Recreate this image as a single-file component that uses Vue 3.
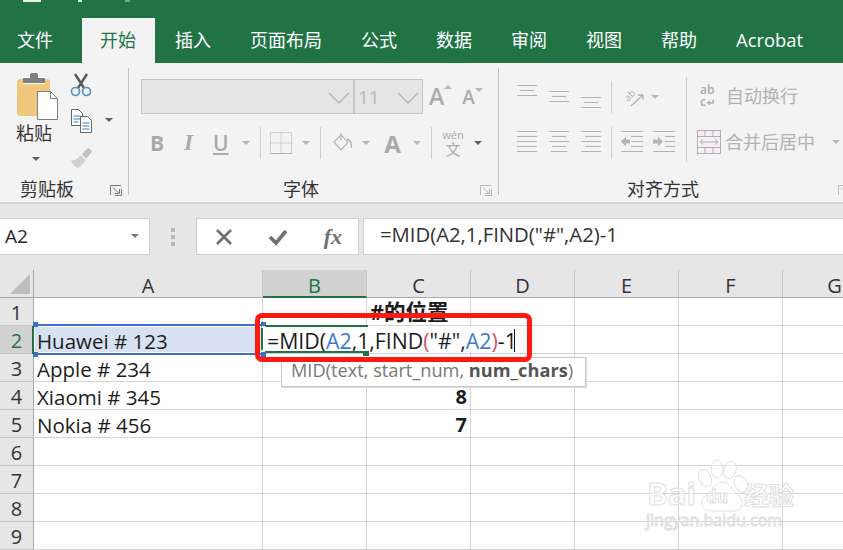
<script setup>
const tabs = ['文件', '开始', '插入', '页面布局', '公式', '数据', '审阅', '视图', '帮助', 'Acrobat']
const cols = ['A', 'B', 'C', 'D', 'E', 'F', 'G']
const rows = [
  { n: 1, cells: ['', '', '#的位置', '', '', '', ''] },
  { n: 2, cells: ['', '', '', '', '', '', ''] },
  { n: 3, cells: ['Apple # 234', '', '', '', '', '', ''] },
  { n: 4, cells: ['Xiaomi # 345', '', '8', '', '', '', ''] },
  { n: 5, cells: ['Nokia # 456', '', '7', '', '', '', ''] },
  { n: 6, cells: ['', '', '', '', '', '', ''] },
  { n: 7, cells: ['', '', '', '', '', '', ''] },
  { n: 8, cells: ['', '', '', '', '', '', ''] },
  { n: 9, cells: ['', '', '', '', '', '', ''] },
]
</script>

<template>
  <div class="app">
    <header class="title">
      <div class="qat">
        <i class="qa qa1"></i><i class="qa qa2"></i><i class="qa qa3"></i>
      </div>
      <nav class="tabs">
        <span v-for="(t, i) in tabs" :key="t" class="tab" :class="{ first: i === 0, active: i === 1 }">{{ t }}</span>
      </nav>
    </header>

    <section class="ribbon">
      <div class="group g-clip">
        <div class="clip-body">
          <div class="paste">
            <svg width="42" height="48" viewBox="0 0 42 48">
              <rect x="0" y="7" width="33" height="37" rx="3" fill="#f0c87d"/>
              <rect x="6" y="5" width="22" height="7" fill="#fff"/>
              <path d="M6 11V6h7V3a2 2 0 0 1 2-2h4a2 2 0 0 1 2 2v3h7v5z" fill="#7f7f7f"/>
              <path d="M20.500 19.500h13l7 7v21h-20z" fill="#fff" stroke="#7f7f7f"/>
              <path d="M33.500 19.500v7h7" fill="none" stroke="#7f7f7f"/>
            </svg>
            <span class="paste-label">粘贴</span>
            <i class="caret dark paste-caret"></i>
          </div>
          <div class="clip-tools">
            <svg width="22" height="24" viewBox="0 0 22 24">
              <path d="M5 1l9 14M17 1L8 15" stroke="#5a5a5a" stroke-width="2.400" fill="none"/>
              <circle cx="5.500" cy="18.500" r="4" fill="none" stroke="#5b8ec7" stroke-width="1.700"/>
              <circle cx="16.500" cy="18.500" r="4" fill="none" stroke="#5b8ec7" stroke-width="1.700"/>
            </svg>
            <div class="copy-row">
              <svg width="22" height="24" viewBox="0 0 22 24">
                <path d="M.5.5h7l4 4v12H.5z" fill="#fff" stroke="#666"/>
                <path d="M2.500 7h7M2.500 10h7M2.500 13h5" stroke="#3f7fc4"/>
                <path d="M9.500 7.500h7l4 4v12h-11z" fill="#fff" stroke="#666"/>
                <path d="M11.500 14h7M11.500 17h7M11.500 20h7" stroke="#3f7fc4"/>
              </svg>
              <i class="caret dark copy-caret"></i>
            </div>
            <svg width="24" height="24" viewBox="0 0 24 24">
              <path d="M1 15c4 1 7-1 9-5l6 5c-3 3-5 6-8 8-3-1-6-4-7-8z" fill="#d3cfd3"/>
              <path d="M12 9l6-6 2 1 2 2-1 2-5 6z" fill="#c4c0c4"/>
            </svg>
          </div>
        </div>
        <div class="glabel clip-label">
          <span>剪贴板</span>
          <svg class="launch" width="12" height="11" viewBox="0 0 12 11"><path d="M.5 10V.5H11M3 2.500l6 6M5 8.500h4.500V4M11.500 4v6.500H5" fill="none" stroke="#777"/></svg>
        </div>
      </div>

      <div class="group g-font">
        <div class="font-row1">
          <div class="combo name"><svg width="22" height="12" viewBox="0 0 22 12"><path d="M1 1l10 10L21 1" fill="none" stroke="#b4b4b4" stroke-width="1.300"/></svg></div>
          <div class="combo size"><span>11</span><svg width="22" height="12" viewBox="0 0 22 12"><path d="M1 1l10 10L21 1" fill="none" stroke="#b4b4b4" stroke-width="1.300"/></svg></div>
          <div class="grow-a big">A<i class="caret up"></i></div>
          <div class="grow-a small">A<i class="caret"></i></div>
        </div>
        <div class="font-row2">
          <b class="fb">B</b>
          <em class="fi">I</em>
          <span class="fu">U</span>
          <i class="caret c-u"></i>
          <i class="vsep s1"></i>
          <svg class="border-ic" width="22" height="22" viewBox="0 0 22 22"><path d="M.5.5h21v21H.5zM11 .5v21M.5 11h21" fill="none" stroke="#b6aeb6" stroke-dasharray="1 1"/><path d="M0 21.500h22" stroke="#b6aeb6"/></svg>
          <i class="caret c-b"></i>
          <i class="vsep s2"></i>
          <svg class="fill-ic" width="19" height="20" viewBox="0 0 19 20"><path d="M1 9l7-7 7 7-7 8z" fill="#f3f3f3" stroke="#b4b4b4" stroke-width="1.200"/><path d="M8 0v7" stroke="#b4b4b4" stroke-width="1.200"/><path d="M14 6c3 1 5 4 4 9" fill="none" stroke="#b4b4b4" stroke-width="1.400"/></svg>
          <i class="caret c-f"></i>
          <span class="fa">A</span>
          <i class="caret c-a"></i>
          <i class="vsep s3"></i>
          <span class="wen"><small>wén</small><span>文</span></span>
          <i class="caret dark c-w"></i>
        </div>
        <div class="glabel font-label">
          <span>字体</span>
          <svg class="launch" width="12" height="11" viewBox="0 0 12 11"><path d="M.5 10V.5H11M3 2.500l6 6M5 8.500h4.500V4M11.500 4v6.500H5" fill="none" stroke="#bbb"/></svg>
        </div>
      </div>

      <div class="group g-align">
        <div class="align-top">
          <div class="align-left">
            <div class="a-row r1">
              <svg class="va v1" width="20" height="11" viewBox="0 0 20 11"><path d="M0 .5h20M3 5.500h14M0 10.500h20" stroke="#b4b4b4" fill="none"/></svg>
              <svg class="va v2" width="20" height="11" viewBox="0 0 20 11"><path d="M0 .5h20M3 5.500h14M0 10.500h20" stroke="#b4b4b4" fill="none"/></svg>
              <svg class="va v3" width="20" height="11" viewBox="0 0 20 11"><path d="M0 .5h20M3 5.500h14M0 10.500h20" stroke="#b4b4b4" fill="none"/></svg>
              <i class="vsep s4"></i>
              <svg class="orient" width="22" height="20" viewBox="0 0 22 20"><path d="M9 19L21 8M21 8h-5M21 8v5" fill="none" stroke="#b4b4b4" stroke-width="1.300"/><text x="6" y="15" font-size="10" fill="#b4b4b4" font-family="Open Sans" transform="rotate(-45 6 15)">ab</text></svg>
              <i class="caret c-o"></i>
            </div>
            <div class="a-row r2">
              <svg class="ha" width="20" height="21" viewBox="0 0 20 21"><path d="M0 .5h20M0 5.500h20M0 10.500h20M0 15.500h20M0 20.500h20" stroke="#b4b4b4"/></svg>
              <svg class="ha h2" width="20" height="21" viewBox="0 0 20 21"><path d="M0 .5h20M3 5.500h14M0 10.500h20M3 15.500h14M2 20.500h16" stroke="#b4b4b4"/></svg>
              <svg class="ha h2" width="20" height="21" viewBox="0 0 20 21"><path d="M0 .5h20M4 5.500h16M0 10.500h20M4 15.500h16M0 20.500h20" stroke="#b4b4b4"/></svg>
              <i class="vsep s5"></i>
              <svg class="ind i1" width="22" height="21" viewBox="0 0 22 21"><path d="M0 .5h22M10 5.500h12M10 10.500h12M10 15.500h12M0 20.500h22" stroke="#b4b4b4"/><path d="M0 10.500l5-5v3h4v4H5v3z" fill="#b4b4b4"/></svg>
              <svg class="ind i2" width="22" height="21" viewBox="0 0 22 21"><path d="M0 .5h22M12 5.500h10M12 10.500h10M12 15.500h10M0 20.500h22" stroke="#b4b4b4"/><path d="M10 10.500l-5-5v3H0v4h5v3z" fill="#b4b4b4"/></svg>
            </div>
          </div>
          <i class="vsep s6"></i>
          <div class="align-right">
            <div class="wrap-row">
              <span class="abc"><span>ab</span><span>c<small>↵</small></span></span>
              <span class="cmd">自动换行</span>
            </div>
            <div class="merge-row">
              <svg width="24" height="24" viewBox="0 0 24 24"><rect x=".5" y=".5" width="23" height="23" fill="#f4eff4" stroke="#b4aeb4"/><path d="M.5 6.500h23M.5 17.500h23M8 .5v6M16 .5v6M8 17.500v6M16 17.500v6" stroke="#b4aeb4" fill="none"/><path d="M3 12h18M6 9.500l-3 2.500 3 2.500M18 9.500l3 2.500-3 2.500" stroke="#b4aeb4" fill="none"/></svg>
              <span class="cmd">合并后居中</span>
              <i class="caret c-m"></i>
            </div>
          </div>
        </div>
        <div class="glabel align-label">
          <span>对齐方式</span>
          <svg class="launch" width="12" height="11" viewBox="0 0 12 11"><path d="M.5 10V.5H11M3 2.500l6 6M5 8.500h4.500V4M11.500 4v6.500H5" fill="none" stroke="#bbb"/></svg>
        </div>
      </div>
    </section>

    <section class="fbar">
      <div class="namebox"><span>A2</span><i class="caret"></i></div>
      <div class="grip"><i></i><i></i><i></i></div>
      <div class="fbtns">
        <svg width="18" height="18" viewBox="0 0 18 18"><path d="M2 2l14 14M16 2L2 16" stroke="#707070" stroke-width="2.600"/></svg>
        <svg width="20" height="18" viewBox="0 0 20 18"><path d="M2 9l6 6L18 3" fill="none" stroke="#707070" stroke-width="3.600"/></svg>
        <span class="fx">fx</span>
      </div>
      <div class="finput">=MID(A2,1,FIND("#",A2)-1</div>
    </section>

    <section class="sheet">
      <div class="corner"><i></i></div>
      <div v-for="c in cols" :key="c" class="chead" :class="{ sel: c === 'B' }">{{ c }}</div>
      <template v-for="r in rows" :key="r.n">
        <div class="rhead" :class="{ sel: r.n === 2 }">{{ r.n }}</div>
        <div v-for="(v, i) in r.cells" :key="i" class="cell" :class="{ hdr: i === 2 && r.n === 1, num: i === 2 && r.n > 1 }">{{ v }}</div>
      </template>

      <div class="range">
        <span>Huawei # 123</span>
        <i class="hd tl"></i><i class="hd bl"></i><i class="hd tr"></i><i class="hd br"></i>
      </div>
      <i class="row-mark"></i>

      <div class="editor">
        <i class="ed-top"></i><i class="ed-bot"></i><i class="ed-left"></i><i class="ed-handle"></i>
        <span>=MID(<b class="ref">A2</b>,1,FIND<b class="par">(</b>"#",<b class="ref">A2</b><b class="par">)</b>-1</span><i class="cursor"></i>
      </div>
      <div class="tip">MID(text, start_num, <b>num_chars</b>)</div>
      <div class="redbox"></div>

      <svg class="mark" width="160" height="85" viewBox="0 0 160 85">
        <g fill="#fff" fill-opacity=".45" stroke="#e0e0e0" stroke-width="1">
          <ellipse cx="64" cy="20" rx="6" ry="9" transform="rotate(-25 64 20)"/>
          <ellipse cx="76" cy="11" rx="6" ry="9"/>
          <ellipse cx="89" cy="12" rx="6" ry="9" transform="rotate(15 89 12)"/>
          <ellipse cx="100" cy="26" rx="6" ry="9" transform="rotate(-30 100 26)"/>
          <path d="M82 24c8 0 9 10 16 14 7 6 3 15-6 15H70c-9 0-12-9-6-15 7-4 9-14 18-14z"/>
        </g>
        <g fill="#fff" fill-opacity=".6" stroke="#e0e0e0" stroke-width="1" font-family="Open Sans" font-weight="700">
          <text x="6" y="47" font-size="31">Bai</text>
          <text x="65" y="45" font-size="17">du</text>
          <text x="103" y="47" font-size="25" font-family="Noto Sans CJK SC">经验</text>
          <text x="5" y="68" font-size="16" font-weight="400">jingyan.baidu.com</text>
        </g>
      </svg>
    </section>
  </div>
</template>

<style>
html, body { margin: 0; background: #fff; overflow: hidden; }
</style>

<style scoped>
.app {
  width: 843px; height: 550px; overflow: hidden; display: flex; flex-direction: column;
  font-family: "Open Sans", "Noto Sans CJK SC", sans-serif; color: #262626;
}
.title { height: 63px; background: #217346; flex: none; position: relative; }
.qat { height: 18px; display: flex; align-items: flex-start; }
.qa { display: block; height: 2px; }
.qa1 { width: 18px; margin-left: 23px; background: #e8efe9; }
.qa2 { width: 4px; margin-left: 37px; background: #e8efe9; }
.qa3 { width: 5px; margin-left: 43px; background: #7fa08c; }
.tabs { display: flex; height: 45px; font-size: 18px; color: #fff; }
.tab { padding: 0 19px 0 20px; line-height: 45px; white-space: nowrap; }
.tab:last-child { font-size: 18.400px; line-height: 43px; }
.tab.first { padding: 0 29px 0 17px; }
.tab.active { background: #f3f3f3; color: #217346; padding: 0 19px 0 18px; }

.ribbon { height: 139px; flex: none; background: #f3f3f3; display: flex; border-bottom: 2px solid #d6d6d6; box-sizing: content-box; }
.group { display: flex; flex-direction: column; position: relative; }
.g-clip { width: 128px; border-right: 1px solid #c4c4c4; margin: 5px 0 7px; height: 127px; }
.g-font { width: 369px; border-right: 1px solid #c4c4c4; margin: 5px 0 7px; height: 127px; }
.g-align { flex: 1; margin: 5px 0 7px; height: 127px; }
.caret { display: block; width: 0; height: 0; border: 4px solid transparent; border-top: 4px solid #b8b8b8; border-bottom: 0; flex: none; }
.caret.dark { border-top-color: #606060; }
.caret.up { border-top: 0; border-bottom: 4px solid #b8b8b8; }
.vsep { display: block; width: 1px; background: #cfcfcf; flex: none; }

.clip-body { display: flex; height: 104px; }
.paste { width: 53px; margin-left: 17px; display: flex; flex-direction: column; align-items: flex-start; padding-top: 4px; }
.paste-label { font-size: 18px; line-height: 24px; margin: 1px 0 0 -1px; color: #333; }
.paste-caret { margin: 12px 0 0 15px; }
.clip-tools { display: flex; flex-direction: column; gap: 12px; padding-top: 5px; }
.copy-row { display: flex; align-items: center; gap: 10px; margin-left: 1px; }
.copy-caret { margin-left: 2px; margin-top: -2px; }
.glabel { position: absolute; left: 0; right: 0; top: 109px; height: 24px; text-align: center; font-size: 18px; line-height: 24px; color: #333; }
.launch { position: absolute; top: 8px; right: 6px; }
.clip-label { text-align: left; }
.clip-label span { margin-left: 20px; }
.font-label span { margin-right: 25px; }
.align-label span { margin-right: 16px; }
.align-label .launch { right: -7px; }
.font-row1 { display: flex; align-items: flex-start; padding: 11px 0 0 12px; height: 35px; }
.combo { height: 35px; box-sizing: border-box; background: #e5e5e5; border: 1px solid #c6c6c6; display: flex; align-items: center; justify-content: flex-end; flex: none; }
.combo svg { margin: 2px 3px 0 0; }
.combo.name { width: 213px; }
.combo.size { width: 69px; justify-content: space-between; color: #b8b8b8; font-size: 19px; padding-left: 3px; }
.grow-a { display: flex; align-items: flex-start; color: #aaa; font-weight: 600; line-height: 1; flex: none; }
.grow-a.big { font-size: 23px; margin: 6px 0 0 6px; }
.grow-a.small { font-size: 19px; margin: 9px 0 0 10px; }
.font-row2 { display: flex; align-items: center; height: 36px; margin-top: 11px; padding-left: 21px; color: #aaa; }
.fb, .fi, .fu, .fa { display: block; flex: none; text-align: center; }
.fb { font-size: 21px; font-weight: 700; width: 14px; }
.fi { font-size: 23px; font-family: "Liberation Serif", serif; font-weight: 700; margin-left: 18px; width: 13px; }
.fu { font-size: 21px; margin-left: 18px; width: 15px; font-weight: 600; text-decoration: underline; text-underline-offset: 2px; }
.c-u { margin-left: 14px; }
.font-row2 .vsep { height: 32px; }
.s1 { margin-left: 10px; }
.border-ic { margin-left: 9px; flex: none; }
.c-b { margin-left: 10px; }
.s2 { margin-left: 10px; }
.fill-ic { margin-left: 12px; flex: none; }
.c-f { margin-left: 10px; }
.fa { font-size: 24px; font-weight: 700; margin-left: 14px; width: 17px; }
.c-a { margin-left: 12px; }
.s3 { margin-left: 10px; }
.wen { display: flex; flex-direction: column; align-items: center; margin: 0 0 0 10px; line-height: 1; width: 22px; flex: none; }
.wen small { font-size: 11px; line-height: 13px; }
.wen span { font-size: 15px; line-height: 17px; }
.c-w { margin-left: 10px; }

.align-top { display: flex; height: 100px; }
.align-left { width: 187px; box-sizing: border-box; padding-left: 18px; flex: none; }
.a-row { display: flex; }
.r1 { height: 46px; padding-top: 17px; box-sizing: border-box; align-items: flex-start; }
.va { flex: none; }
.v2 { margin: 6px 0 0 12px; }
.v3 { margin: 12px 0 0 12px; }
.s4 { height: 32px; margin: -4px 0 0 10px; }
.orient { margin: 2px 0 0 10px; flex: none; overflow: visible; }
.c-o { margin: 10px 0 0 7px; }
.r2 { height: 36px; margin-top: 17px; align-items: flex-start; }
.h2 { margin-left: 12px; }
.s5 { height: 32px; margin: -4px 0 0 10px; }
.i1 { margin-left: 9px; }
.i2 { margin-left: 10px; }
.s6 { height: 85px; margin-top: 9px; }
.align-right { padding-left: 10px; }
.wrap-row { display: flex; align-items: center; height: 34px; margin: 11px 0 0 3px; }
.abc { display: flex; flex-direction: column; color: #aaa; font-size: 12px; line-height: 12px; width: 26px; font-weight: 600; flex: none; }
.abc small { font-size: 10px; margin-left: 1px; }
.cmd { font-size: 18px; color: #b2b2b2; line-height: 24px; white-space: nowrap; }
.merge-row { display: flex; align-items: center; gap: 4px; height: 34px; margin-top: 12px; }
.merge-row svg { flex: none; }
.c-m { margin-left: 13px; }

.fbar { height: 66px; flex: none; background: #e6e6e6; display: flex; align-items: flex-start; padding-top: 14px; box-sizing: border-box; }
.namebox { width: 150px; height: 37px; box-sizing: border-box; background: #fff; border: 1px solid #d0d0d0; border-left: 0; display: flex; align-items: center; justify-content: space-between; padding: 0 10px 2px 5px; font-size: 19px; flex: none; }
.namebox .caret { border-top-color: #7a7a7a; }
.grip { width: 46px; height: 37px; flex: none; display: flex; flex-direction: column; justify-content: center; align-items: center; gap: 3px; }
.grip i { display: block; width: 4px; height: 4px; background: #b8b8b8; }
.fbtns { width: 163px; height: 37px; box-sizing: border-box; background: #fff; border: 1px solid #d0d0d0; display: flex; align-items: center; justify-content: space-between; padding: 0 16px 0 18px; flex: none; }
.fx { font-family: "Liberation Serif", serif; font-style: italic; font-weight: 700; font-size: 22px; color: #707070; }
.finput { flex: 1; height: 37px; margin-left: 4px; box-sizing: border-box; background: #fff; border: 1px solid #d0d0d0; border-right: 0; padding-left: 16px; font-size: 20.300px; line-height: 31px; color: #333; white-space: nowrap; }

.sheet { flex: 1; position: relative; display: grid; grid-template-columns: 34px 229px repeat(6, 104px); grid-template-rows: 28px repeat(9, 28px); background: #fff; }
.corner { background: #e6e6e6; border-right: 1px solid #a9a9a9; border-bottom: 1px solid #a9a9a9; box-sizing: border-box; display: flex; justify-content: flex-end; align-items: flex-end; padding: 0 3px 3px 0; }
.corner i { display: block; width: 0; height: 0; border-left: 20px solid transparent; border-bottom: 20px solid #bdbdbd; }
.chead { background: #e6e6e6; border-right: 1px solid #c6c6c6; border-bottom: 1px solid #a9a9a9; box-sizing: border-box; text-align: center; font-size: 20px; line-height: 31px; color: #333; overflow: hidden; }
.chead.sel { background: #d2d2d2; color: #217346; border-bottom: 2px solid #217346; }
.rhead { background: #e6e6e6; border-right: 1px solid #a9a9a9; border-bottom: 1px solid #c6c6c6; box-sizing: border-box; text-align: center; font-size: 20px; line-height: 30px; color: #333; }
.rhead.sel { background: #d2d2d2; color: #217346; }
.cell { border-right: 1px solid #d4d4d4; border-bottom: 1px solid #d4d4d4; box-sizing: border-box; font-size: 20.500px; line-height: 30px; padding-left: 3px; white-space: nowrap; color: #1c1c1c; }
.cell.num { font-weight: 700; text-align: right; padding: 0 3px 0 0; font-size: 20px; }
.cell.hdr { font-weight: 700; line-height: 28px; font-size: 21.500px; }

.range { position: absolute; left: 35px; top: 54px; width: 228px; height: 31px; box-sizing: border-box; background: #d7e1f2; border-top: 2px solid #3a70c8; border-bottom: 2px solid #3a70c8; box-shadow: inset 0 1px #fff, inset 0 -1px #fff; font-size: 20.500px; line-height: 30px; padding-left: 2px; color: #1c1c1c; }
.hd { position: absolute; width: 5px; height: 5px; background: #3a70c8; }
.tl { left: -2px; top: -4px; } .bl { left: -2px; bottom: -4px; } .tr { right: -3px; top: -4px; } .br { right: -3px; bottom: -4px; }
.row-mark { position: absolute; left: 32px; top: 56px; width: 2px; height: 28px; background: #217346; }

.editor { position: absolute; left: 262px; top: 56px; width: 260px; height: 26px; background: #fff; font-size: 21.300px; line-height: 30px; color: #1c1c1c; padding-left: 5px; box-sizing: border-box; white-space: nowrap; display: flex; }
.editor b { font-weight: 400; }
.ref { color: #3f78d6; }
.par { color: #d8506a; }
.cursor { display: block; width: 1px; height: 23px; background: #111; margin: 3px 0 0 -3px; flex: none; }
.ed-top { position: absolute; left: 3px; top: -1px; width: 103px; height: 2px; background: #217346; }
.ed-bot { position: absolute; left: 3px; bottom: -1px; width: 103px; height: 2px; background: #217346; }
.ed-left { position: absolute; left: -1px; top: 2px; width: 2px; height: 22px; background: #217346; }
.ed-handle { position: absolute; left: 101px; bottom: -4px; width: 6px; height: 5px; background: #217346; }
.tip { position: absolute; left: 281px; top: 87px; width: 305px; height: 30px; box-sizing: border-box; background: #fff; border: 1px solid #c9c9c9; box-shadow: 1px 1px 1px #ddd; font-size: 18.200px; line-height: 24px; padding-left: 9px; color: #777; white-space: nowrap; }
.tip b { color: #555; }
.redbox { position: absolute; left: 255px; top: 43px; width: 277px; height: 49px; box-sizing: border-box; border: 5px solid #ff1a0f; border-radius: 7px; pointer-events: none; }
.mark { position: absolute; left: 641px; top: 188px; overflow: visible; }
</style>
